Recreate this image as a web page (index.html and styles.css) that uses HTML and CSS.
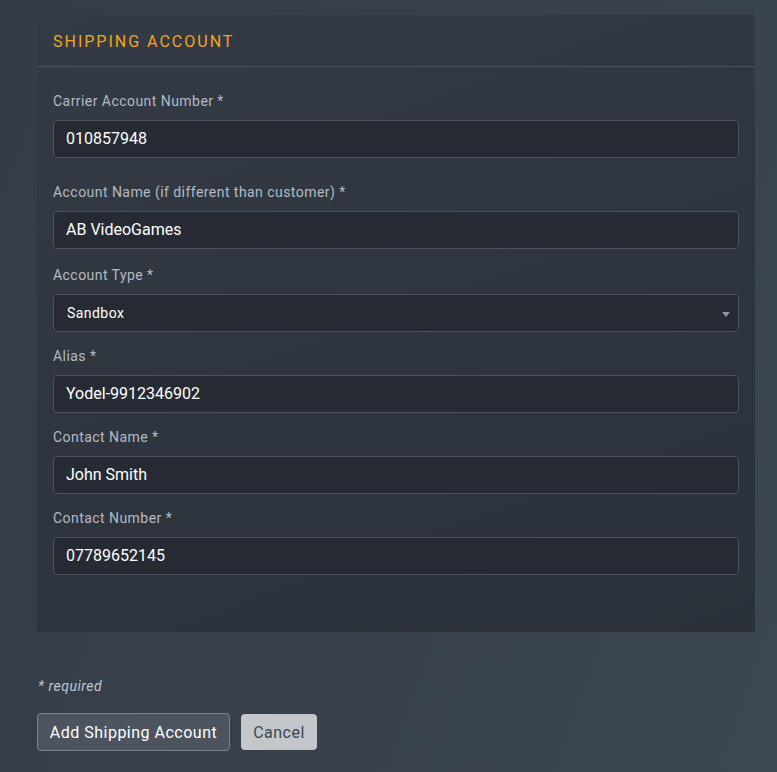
FILE: index.html
```html
<!DOCTYPE html>
<html lang="en">
<head>
<meta charset="utf-8">
<title>Shipping Account</title>
<link rel="stylesheet" href="styles.css">
</head>
<body>
<div class="page">
  <section class="panel">
    <header class="panel-head"><h2 class="panel-title">SHIPPING ACCOUNT</h2></header>
    <div class="panel-body">
      <div class="field f-1">
        <label class="label">Carrier Account Number *</label>
        <div class="input">010857948</div>
      </div>
      <div class="field f-2">
        <label class="label">Account Name (if different than customer) *</label>
        <div class="input">AB VideoGames</div>
      </div>
      <div class="field">
        <label class="label">Account Type *</label>
        <div class="input select"><span>Sandbox</span><span class="caret"></span></div>
      </div>
      <div class="field">
        <label class="label">Alias *</label>
        <div class="input">Yodel-9912346902</div>
      </div>
      <div class="field">
        <label class="label">Contact Name *</label>
        <div class="input">John Smith</div>
      </div>
      <div class="field last">
        <label class="label">Contact Number *</label>
        <div class="input">07789652145</div>
      </div>
    </div>
  </section>
  <p class="required">* required</p>
  <div class="actions">
    <button class="btn btn-primary">Add Shipping Account</button>
    <button class="btn btn-cancel">Cancel</button>
  </div>
</div>
</body>
</html>
```
FILE: styles.css
```css
html, body {
  margin: 0;
  padding: 0;
}
body {
  width: 777px;
  height: 772px;
  overflow: hidden;
  font-family: Roboto, "Liberation Sans", sans-serif;
  background: linear-gradient(110deg, #333c47 0%, #37404b 50%, #3d4753 100%);
}
.page {
  padding: 15px 22px 0 37px;
}
.panel {
  width: 718px;
  height: 617px;
  background: linear-gradient(160deg, #333b46 0%, #2e353f 55%, #2b3139 100%);
  box-sizing: border-box;
}
.panel-head {
  height: 52px;
  border-bottom: 1px solid #4c5360;
  display: flex;
  align-items: center;
  padding: 0 16px;
  box-sizing: border-box;
}
.panel-title {
  margin: 0;
  font-size: 16px;
  font-weight: 400;
  letter-spacing: 2px;
  color: #f2a51a;
  padding-top: 1px;
}
.panel-body {
  padding: 24px 16px 0;
}
.field {
  margin-bottom: 14px;
}
.field.f-1 { margin-bottom: 24px; }
.field.f-2 { margin-bottom: 16px; }
.field.last { margin-bottom: 0; }
.label {
  display: block;
  font-size: 14px;
  line-height: 20px;
  letter-spacing: 0.45px;
  color: #b4bbc4;
  margin-bottom: 9px;
}
.input {
  height: 38px;
  box-sizing: border-box;
  border: 1px solid #4b5260;
  border-radius: 4px;
  background: #262b33;
  color: #ffffff;
  font-size: 16px;
  line-height: 36px;
  padding: 0 12px;
}
.select {
  display: flex;
  justify-content: space-between;
  align-items: center;
  font-size: 14px;
  font-weight: 400;
  letter-spacing: 0.45px;
  color: #ffffff;
  padding-left: 13px;
  padding-right: 8px;
}
.caret {
  width: 0;
  height: 0;
  border-left: 4px solid transparent;
  border-right: 4px solid transparent;
  border-top: 5px solid #8b94a1;
  margin-top: 2px;
}
.required {
  margin: 44px 0 0 1px;
  font-size: 14px;
  line-height: 20px;
  font-style: italic;
  letter-spacing: 0.55px;
  color: #c0c6cd;
}
.actions {
  display: flex;
  align-items: center;
  gap: 11px;
  margin-top: 17px;
}
.btn {
  font-family: Roboto, "Liberation Sans", sans-serif;
  font-size: 16px;
  letter-spacing: 0.5px;
  border-radius: 4px;
  cursor: pointer;
}
.btn-primary {
  height: 38px;
  width: 193px;
  background: #4c545f;
  border: 1px solid #7b838e;
  color: #ffffff;
  padding: 0;
}
.btn-cancel {
  height: 36px;
  width: 76px;
  background: #c3c7cb;
  border: none;
  color: #3b4452;
  padding: 0;
}
```
